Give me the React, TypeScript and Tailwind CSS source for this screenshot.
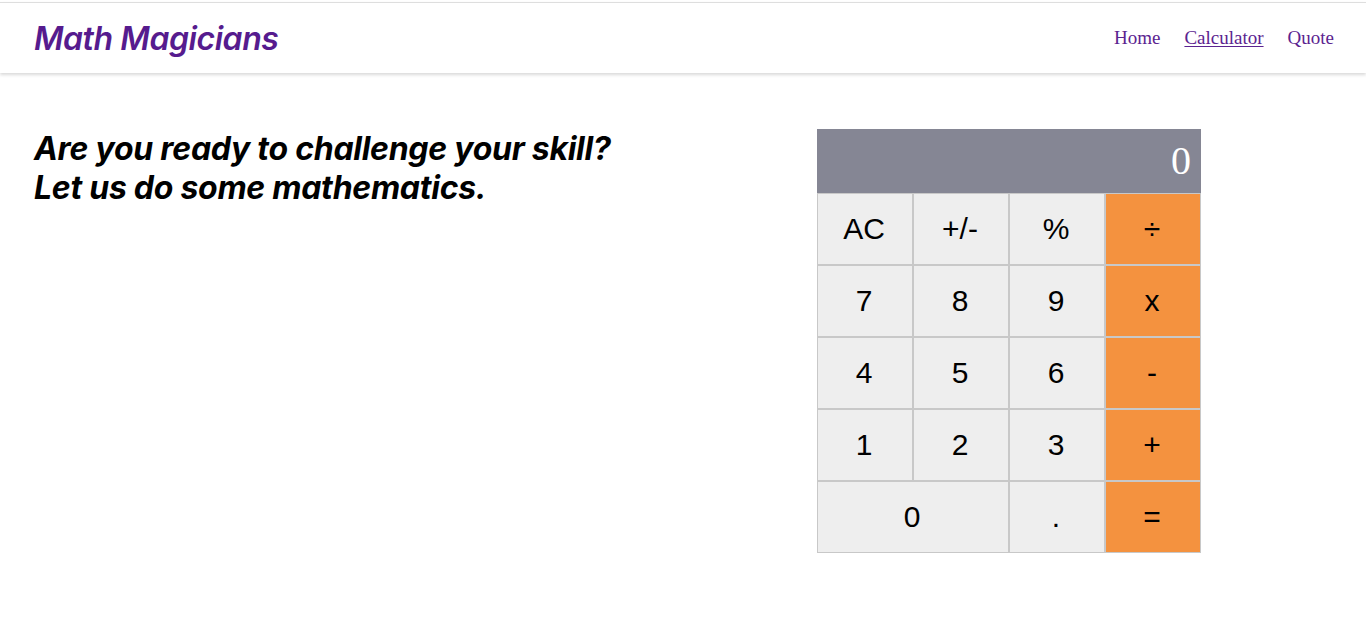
const keys: { label: string; wide?: boolean; op?: boolean }[] = [
  { label: "AC" },
  { label: "+/-" },
  { label: "%" },
  { label: "÷", op: true },
  { label: "7" },
  { label: "8" },
  { label: "9" },
  { label: "x", op: true },
  { label: "4" },
  { label: "5" },
  { label: "6" },
  { label: "-", op: true },
  { label: "1" },
  { label: "2" },
  { label: "3" },
  { label: "+", op: true },
  { label: "0", wide: true },
  { label: "." },
  { label: "=", op: true },
];

export default function App() {
  return (
    <div className="min-h-[639px] bg-white">
      {/* Header */}
      <header className="mt-[2px] flex h-[71px] items-center justify-between border-t border-[#dedede] bg-white pl-[34px] pr-[32px] pt-[2px] shadow-[0_2px_3px_rgba(0,0,0,0.15)]">
        <h1 className="font-['Inter',sans-serif] text-[32px] font-semibold italic tracking-[-0.45px] text-[#561b8e]">
          Math Magicians
        </h1>
        <nav className="flex items-center gap-6 pb-[2px] font-['Liberation_Serif',serif] text-[19px] text-[#5b2390]">
          <a href="#" className="no-underline">
            Home
          </a>
          <a href="#" className="underline underline-offset-2">
            Calculator
          </a>
          <a href="#" className="no-underline">
            Quote
          </a>
        </nav>
      </header>

      {/* Main */}
      <main className="flex items-start pl-[34px] pt-[56px]">
        <h2 className="w-[783px] font-['Inter',sans-serif] text-[32px] font-bold italic leading-[39px] tracking-[-0.27px] text-black">
          Are you ready to challenge your skill?
          <br />
          Let us do some mathematics.
        </h2>

        <div className="w-[384px]">
          <div className="flex h-[64px] items-center justify-end bg-[#858694] pr-[10px] font-['Liberation_Serif',serif] text-[40px] text-white">
            0
          </div>
          <div className="grid grid-cols-4">
            {keys.map((k) => (
              <button
                key={k.label}
                className={
                  "flex h-[72px] items-center justify-center border border-[#c8c8c8] pb-[2px] pr-[2px] font-['Liberation_Sans',Arial,sans-serif] text-[30px] text-black " +
                  (k.wide ? "col-span-2 " : "") +
                  (k.op ? "bg-[#f4923f]" : "bg-[#eeeeee]")
                }
              >
                {k.label}
              </button>
            ))}
          </div>
        </div>
      </main>
    </div>
  );
}
